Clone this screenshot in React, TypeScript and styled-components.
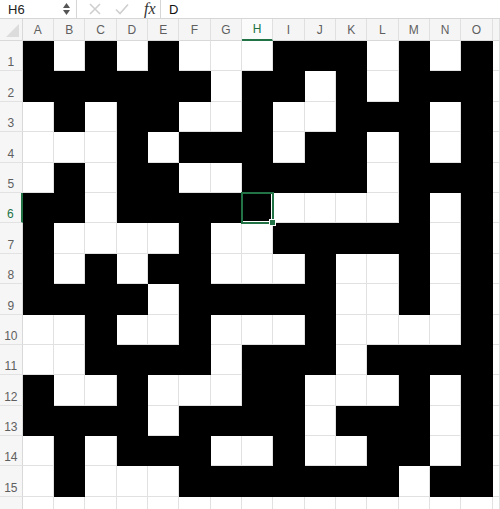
import React from 'react'
import styled, { createGlobalStyle } from 'styled-components'

const GlobalStyle = createGlobalStyle`
  html, body {
    margin: 0;
    padding: 0;
    background: #ffffff;
    font-family: "Liberation Sans", Arial, sans-serif;
    overflow: hidden;
  }
`

// 1 = black cell, 0 = white cell (rows 1..15, columns A..O)
const MAZE = [
  '101010001110101',
  '111111011010111',
  '010110010011101',
  '000101110110101',
  '010110011110111',
  '110111110000101',
  '100001001111101',
  '101011000100101',
  '111101111100101',
  '001001000100001',
  '001111011101111',
  '100100011000101',
  '111101111011101',
  '010111001001101',
  '010001111111011',
]

const COLUMNS = 'ABCDEFGHIJKLMNO'.split('')
const SELECTED = { row: 5, col: 7 }
const GREEN = '#217346'

const Page = styled.div`
  width: 500px;
  height: 509px;
  display: flex;
  flex-direction: column;
  overflow: hidden;
`

const FormulaBar = styled.div`
  height: 22px;
  display: flex;
  align-items: center;
  border-bottom: 1px solid #d6d6d6;
  background: #fff;
`

const NameBox = styled.div`
  width: 77px;
  height: 100%;
  display: flex;
  align-items: center;
  justify-content: space-between;
  padding: 0 6px 0 8px;
  box-sizing: border-box;
  border-right: 1px solid #d6d6d6;
  font-size: 13px;
  color: #222;
`

const Spinner = styled.div`
  display: flex;
  flex-direction: column;
  gap: 2px;
  color: #555;
`

const Divider = styled.div`
  width: 1px;
  height: 100%;
  background: #d6d6d6;
`

const Tools = styled.div`
  display: flex;
  align-items: center;
  height: 100%;
  padding-left: 11px;
  gap: 12px;
`

const Fx = styled.span`
  font-family: "Liberation Serif", "Times New Roman", serif;
  font-style: italic;
  font-size: 16px;
  color: #333;
  width: 16px;
  margin-left: 2px;
`

const FormulaText = styled.div`
  padding-left: 8px;
  font-size: 13px;
  color: #111;
`

const Sheet = styled.div`
  flex: 1;
  display: grid;
  grid-template-columns: 22.7px repeat(15, 31.33px) 1fr;
  grid-template-rows: 22px repeat(16, 30.4px);
`

const Corner = styled.div`
  position: relative;
  background: #f5f5f5;
  border-right: 1px solid #d9d9d9;
  border-bottom: 1px solid #d9d9d9;
  box-sizing: border-box;
  overflow: hidden;
  &::after {
    content: '';
    position: absolute;
    right: 3px;
    bottom: 3px;
    border-style: solid;
    border-width: 0 0 13px 13px;
    border-color: transparent transparent #dcdcdc transparent;
  }
`

const ColHeader = styled.div<{ $active?: boolean }>`
  display: flex;
  align-items: center;
  justify-content: center;
  background: ${p => (p.$active ? '#fbfbfb' : '#f5f5f5')};
  color: ${p => (p.$active ? GREEN : '#5f5f5f')};
  font-size: 12px;
  border-right: 1px solid #e0e0e0;
  border-bottom: ${p => (p.$active ? `2px solid ${GREEN}` : '1px solid #d9d9d9')};
  box-sizing: border-box;
`

const RowHeader = styled.div<{ $active?: boolean }>`
  display: flex;
  align-items: flex-end;
  justify-content: center;
  padding-bottom: 1px;
  background: #f6f6f6;
  color: ${p => (p.$active ? GREEN : '#5f5f5f')};
  font-size: 12px;
  border-right: ${p => (p.$active ? `2px solid ${GREEN}` : '1px solid #d9d9d9')};
  border-bottom: 1px solid #e2e2e2;
  box-sizing: border-box;
`

const Cell = styled.div<{ $filled?: boolean; $selected?: boolean }>`
  position: relative;
  background: ${p => (p.$filled ? '#000' : '#fff')};
  border-right: 1px solid ${p => (p.$filled ? '#000' : '#e1e1e1')};
  border-bottom: 1px solid ${p => (p.$filled ? '#000' : '#e1e1e1')};
  box-sizing: border-box;
  ${p =>
    p.$selected &&
    `
    outline: 2px solid ${GREEN};
    outline-offset: -1px;
    box-shadow: inset 0 0 0 1px #fff;
    z-index: 2;
  `}
`

const FillHandle = styled.span`
  position: absolute;
  right: -4px;
  bottom: -4px;
  width: 5px;
  height: 5px;
  background: ${GREEN};
  border: 1px solid #fff;
`

const CrossIcon = () => (
  <svg width="14" height="14" viewBox="0 0 14 14">
    <path d="M2 2 L12 12 M12 2 L2 12" stroke="#cfcfcf" strokeWidth="1.6" fill="none" />
  </svg>
)

const CheckIcon = () => (
  <svg width="16" height="14" viewBox="0 0 16 14">
    <path d="M2 7.5 L6 11.5 L14 2.5" stroke="#cfcfcf" strokeWidth="1.6" fill="none" />
  </svg>
)

const SpinnerArrows = () => (
  <Spinner>
    <svg width="7" height="5" viewBox="0 0 7 5">
      <path d="M3.5 0 L7 5 L0 5 Z" fill="#555" />
    </svg>
    <svg width="7" height="5" viewBox="0 0 7 5">
      <path d="M0 0 L7 0 L3.5 5 Z" fill="#555" />
    </svg>
  </Spinner>
)

const App = () => {
  const rows = [...MAZE, '']
  return (
    <Page>
      <GlobalStyle />
      <FormulaBar>
        <NameBox>
          <span>H6</span>
          <SpinnerArrows />
        </NameBox>
        <Tools>
          <CrossIcon />
          <CheckIcon />
          <Fx>fx</Fx>
        </Tools>
        <Divider />
        <FormulaText>D</FormulaText>
      </FormulaBar>
      <Sheet>
        <Corner />
        {COLUMNS.map((c, i) => (
          <ColHeader key={c} $active={i === SELECTED.col}>{c}</ColHeader>
        ))}
        <ColHeader />
        {rows.map((line, r) => (
          <React.Fragment key={r}>
            <RowHeader $active={r === SELECTED.row}>{r < MAZE.length ? r + 1 : ''}</RowHeader>
            {COLUMNS.map((c, i) => {
              const selected = r === SELECTED.row && i === SELECTED.col
              return (
                <Cell key={c} $filled={line[i] === '1'} $selected={selected}>
                  {selected && <FillHandle />}
                </Cell>
              )
            })}
            <Cell />
          </React.Fragment>
        ))}
      </Sheet>
    </Page>
  )
}

export default App
